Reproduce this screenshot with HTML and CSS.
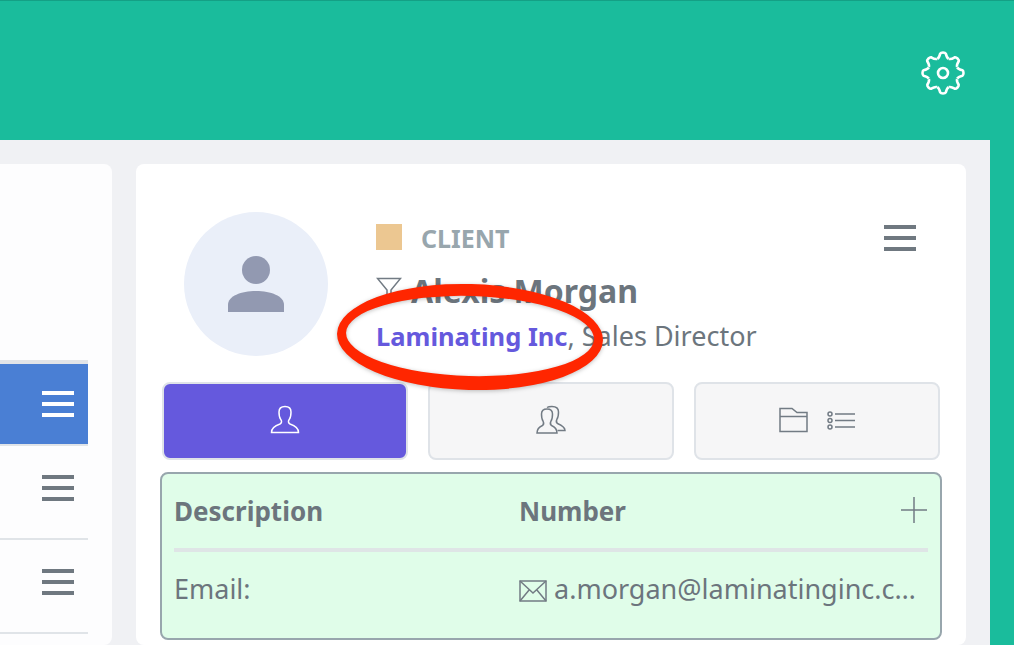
FILE: index.html
```html
<!DOCTYPE html>
<html lang="en">
<head>
    <meta charset="UTF-8">
    <meta name="viewport" content="width=device-width, initial-scale=1.0">
    <title>Client Contact</title>
    <link rel="stylesheet" href="styles.css">
</head>
<body>
    <!-- Top bar -->
    <header class="topbar">
        <svg class="gear" width="44" height="44" viewBox="-22 -22 44 44">
            <defs>
                <path id="tooth" d="M-5.700 -14.200 Q-3.800 -15.200 -2.800 -19.400 Q-2.200 -20.500 0 -20.500 Q2.200 -20.500 2.800 -19.400 Q3.800 -15.200 5.700 -14.200"/>
            </defs>
            <g fill="none" stroke="#fff" stroke-width="2.600" stroke-linejoin="miter">
                <use href="#tooth"/>
                <use href="#tooth" transform="rotate(45)"/>
                <use href="#tooth" transform="rotate(90)"/>
                <use href="#tooth" transform="rotate(135)"/>
                <use href="#tooth" transform="rotate(180)"/>
                <use href="#tooth" transform="rotate(225)"/>
                <use href="#tooth" transform="rotate(270)"/>
                <use href="#tooth" transform="rotate(315)"/>
                <circle r="5"/>
            </g>
        </svg>
    </header>

    <main class="content">
        <!-- Contact list -->
        <section class="card list-card">
            <div class="list">
                <div class="list-row active"><div class="menu-icon"><span></span><span></span><span></span></div></div>
                <div class="list-row"><div class="menu-icon"><span></span><span></span><span></span></div></div>
                <div class="list-row"><div class="menu-icon"><span></span><span></span><span></span></div></div>
            </div>
        </section>

        <!-- Contact detail -->
        <section class="card detail-card">
            <div class="profile">
                <div class="avatar">
                    <svg width="56" height="56" viewBox="0 0 56 56" fill="#9299b1">
                        <circle cx="28" cy="14" r="14"/>
                        <path d="M0 56V49C0 40 13 35 28 35S56 40 56 49V56Z"/>
                    </svg>
                </div>
                <div class="profile-info">
                    <div class="type-line">
                        <span class="type-swatch"></span>
                        <span class="type-label">CLIENT</span>
                    </div>
                    <div class="name-line">
                        <svg width="26" height="26" viewBox="0 0 26 26">
                            <path d="M1.500 1.500H24.500L15 13V24L11 24V13Z" fill="none" stroke="#727b84" stroke-width="1.500"/>
                        </svg>
                        <span class="name">Alexis Morgan</span>
                    </div>
                    <div class="role-line"><a class="company">Laminating Inc</a>, Sales Director</div>
                </div>
                <div class="menu-icon profile-menu"><span></span><span></span><span></span></div>
            </div>

            <div class="tabs">
                <button class="tab selected">
                    <svg width="30" height="30" viewBox="0 0 30 30" fill="none" stroke="currentColor" stroke-width="1.500">
                        <path d="M1.500 27.500H28.500C28.500 22.500 24.500 20.500 20 19C18 18 18 16 19.500 14C21 12 21 9 21 7C21 3.500 18.500 1.500 15 1.500S9 3.500 9 7C9 9 9 12 10.500 14C12 16 12 18 10 19C5.500 20.500 1.500 22.500 1.500 27.500Z"/>
                    </svg>
                </button>
                <button class="tab">
                    <svg width="30" height="30" viewBox="0 0 30 30" fill="none" stroke="currentColor" stroke-width="1.500">
                        <path d="M1 28H21C21 24 19 22 15.500 20.500C14 19.500 14 18 15 16C16.500 14 16.500 11 16.500 9C16.500 6 14.500 4 11 4S5.500 6 5.500 9C5.500 11 5.500 14 7 16C8 18 8 19.500 6.500 20.500C3 22 1 24 1 28Z"/>
                        <path d="M11 2.500C12.500 1.500 14 1.500 16 1.500C20 1.500 22.500 3.500 22.500 7C22.500 9 22.500 12 21 14C20 16 20 17.500 21.500 18.500C25 20 29 22 29 25.500H21.500"/>
                    </svg>
                </button>
                <button class="tab">
                    <svg width="77" height="26" viewBox="0 0 77 26" fill="none" stroke="currentColor" stroke-width="1.500">
                        <path d="M1 24.500V1.500H13L18 5.500H28V24.500Z"/>
                        <path d="M1 9.500H28"/>
                        <circle cx="51" cy="7" r="2"/>
                        <circle cx="51" cy="13.500" r="2"/>
                        <circle cx="51" cy="20" r="2"/>
                        <path d="M56 7H76M56 13.500H76M56 20H76"/>
                    </svg>
                </button>
            </div>

            <div class="numbers">
                <div class="numbers-head">
                    <span class="col-label">Description</span>
                    <span class="col-value">Number</span>
                    <svg class="add" width="26" height="26" viewBox="0 0 26 26" stroke="#727b84" stroke-width="1.500">
                        <path d="M13 0V26M0 13H26"/>
                    </svg>
                </div>
                <div class="numbers-row">
                    <span class="col-label">Email:</span>
                    <span class="col-value email">
                        <svg width="28" height="22" viewBox="0 0 28 22" fill="none" stroke="#727b84" stroke-width="1.500">
                            <path d="M1 1H27V21H1Z"/>
                            <path d="M1 1L14 13L27 1M1 21L10.500 9.500M27 21L17.500 9.500"/>
                        </svg>
                        <span class="email-text">a.morgan@laminatinginc.com</span>
                    </span>
                </div>
            </div>
        </section>
    </main>

    <!-- Hand-drawn annotation -->
    <svg class="annotation" width="290" height="130" viewBox="0 0 290 130">
        <path d="M4 63A133 53 0 1 0 270 63A133 53 0 1 0 4 63ZM13 62A124 40 0 1 0 261 62A124 40 0 1 0 13 62Z" transform="rotate(1.500 137 63)" fill="#ff2600" fill-rule="evenodd"/>
    </svg>
</body>
</html>
```

FILE: styles.css
```css
html, body {
    height: 100%;
}
body {
    margin: 0;
    background-color: #1abc9c;
    font-family: "Noto Sans", "Lato", sans-serif;
    color: #6c757d;
    overflow: hidden;
}
.topbar {
    height: 140px;
    box-sizing: border-box;
    border-top: 1px solid #14a085;
    display: flex;
    justify-content: flex-end;
    align-items: flex-start;
    padding: 50px 49px 0 0;
}
.content {
    width: 990px;
    height: 505px;
    box-sizing: border-box;
    background-color: #f0f1f4;
    padding: 24px 24px 0 0;
    display: flex;
    gap: 24px;
    overflow: hidden;
}
.card {
    background-color: #fff;
    border-radius: 8px;
}
.list-card {
    width: 112px;
    flex-shrink: 0;
    background-color: #fdfdfe;
    border-radius: 0 8px 8px 0;
    padding-top: 196px;
    box-sizing: border-box;
}
.list {
    width: 88px;
    border-top: 4px solid #e2e4e8;
}
.list-row {
    height: 92px;
    border-bottom: 2px solid #e0e4e8;
    display: flex;
    justify-content: flex-end;
    align-items: center;
    padding-right: 14px;
}
.list-row .menu-icon {
    margin-bottom: 8px;
}
.list-row.active {
    height: 80px;
    background-color: #4a7fd4;
}
.list-row.active .menu-icon {
    margin-bottom: 0;
}
.menu-icon {
    width: 32px;
    display: flex;
    flex-direction: column;
    gap: 7px;
}
.menu-icon span {
    height: 4px;
    background-color: #6f7880;
}
.active .menu-icon span {
    background-color: #fff;
}
.detail-card {
    flex: 1;
    min-width: 0;
    padding: 48px 24px 0;
    box-sizing: border-box;
}
.profile {
    display: flex;
    gap: 48px;
    padding: 0 26px 0 24px;
}
.avatar {
    width: 144px;
    height: 144px;
    flex-shrink: 0;
    border-radius: 50%;
    background-color: #eaeff9;
    display: flex;
    align-items: center;
    justify-content: center;
}
.profile-info {
    padding-top: 12px;
}
.type-line {
    display: flex;
    align-items: center;
    gap: 19px;
    height: 26px;
}
.type-swatch {
    width: 26px;
    height: 26px;
    background-color: #ecc791;
}
.type-label {
    font-size: 25px;
    font-weight: 700;
    color: #98a6ad;
    margin-top: 1px;
}
.name-line {
    display: flex;
    align-items: center;
    gap: 9px;
    margin-top: 20px;
    height: 40px;
}
.name {
    font-size: 32px;
    font-weight: 700;
    color: #6c757d;
}
.role-line {
    font-size: 27px;
    line-height: 36px;
    margin-top: 8px;
}
.company {
    color: #6559dd;
    font-size: 25.500px;
    font-weight: 700;
}
.profile-menu {
    margin-left: auto;
    margin-top: 13px;
}
.tabs {
    display: flex;
    gap: 20px;
    margin: 26px 2px 0;
}
.tab {
    flex: 1;
    height: 78px;
    border: 2px solid #dfe3e8;
    border-radius: 8px;
    background-color: #f6f6f7;
    color: #727b84;
    display: flex;
    align-items: center;
    justify-content: center;
    padding: 0;
}
.tab svg {
    margin-bottom: 3px;
}
.tab.selected {
    background-color: #6559dd;
    color: #fff;
}
.numbers {
    margin-top: 12px;
    height: 168px;
    box-sizing: border-box;
    border: 2px solid #98a6ad;
    border-radius: 8px;
    background-color: #e0fde9;
    padding: 0 12px;
}
.numbers-head, .numbers-row {
    display: flex;
    align-items: center;
}
.numbers-head {
    height: 74px;
    border-bottom: 4px solid #dfe5e6;
    font-size: 26px;
    font-weight: 700;
}
.numbers-row {
    height: 78px;
    padding-bottom: 6px;
    box-sizing: border-box;
    font-size: 27px;
}
.col-label {
    width: 345px;
    flex-shrink: 0;
}
.col-value {
    flex: 1;
    min-width: 0;
}
.add {
    margin-right: 1px;
    margin-bottom: 3px;
}
.email {
    display: flex;
    align-items: center;
    gap: 7px;
    padding-right: 8px;
}
.email svg {
    flex-shrink: 0;
    margin-top: 5px;
}
.email-text {
    min-width: 0;
    overflow: hidden;
    white-space: nowrap;
    text-overflow: ellipsis;
}
.annotation {
    position: absolute;
    left: 333px;
    top: 274px;
    filter: drop-shadow(0 1px 2px rgba(0,0,0,0.25));
}
```
